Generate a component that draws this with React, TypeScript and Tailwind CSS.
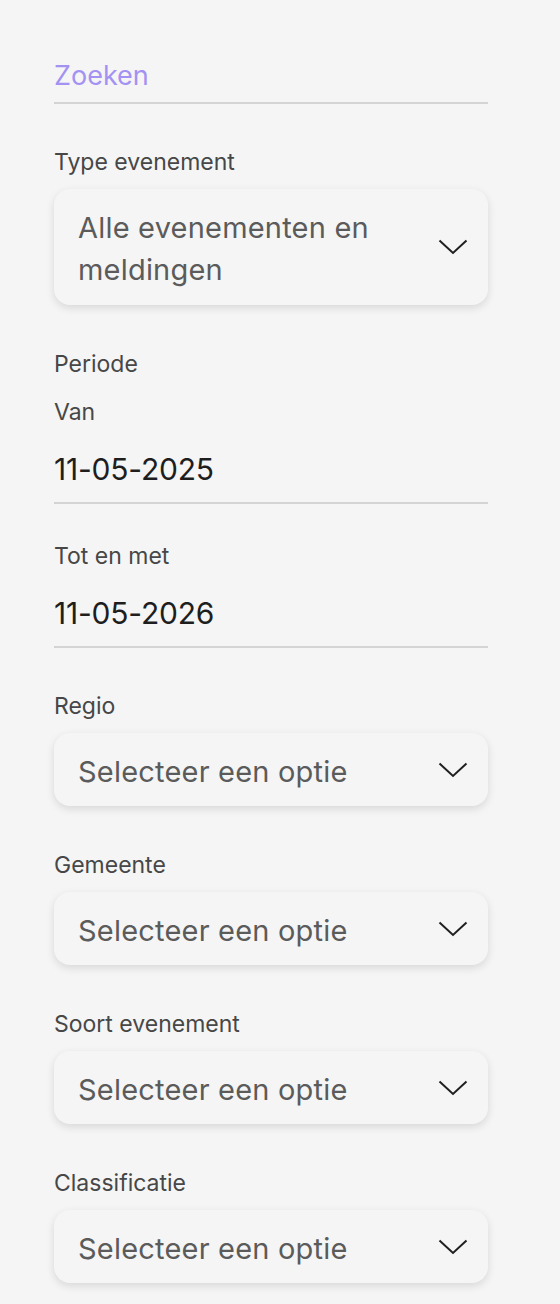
import React from "react";

const font = { fontFamily: "Inter, 'Noto Sans', sans-serif" };

function Chevron() {
  return (
    <svg width="30" height="16" viewBox="0 0 30 16" fill="none" className="shrink-0">
      <path d="M1.5 1.5 L15 14 L28.5 1.5" stroke="#1f1f1f" strokeWidth="2" />
    </svg>
  );
}

function Select({ text, tall }: { text: React.ReactNode; tall?: boolean }) {
  return (
    <div
      className={`flex items-center justify-between rounded-[16px] bg-[#f5f5f5] pl-6 pr-5 shadow-[0_3px_8px_rgba(0,0,0,0.12)] ${
        tall ? "h-[116px]" : "h-[73px]"
      }`}
    >
      <div className="pt-[4px] text-[29px] leading-[42px] text-[#5b5b5b] tracking-[0.2px]">{text}</div>
      <Chevron />
    </div>
  );
}

function Label({ children }: { children: React.ReactNode }) {
  return <div className="text-[23px] leading-[30px] text-[#474747]">{children}</div>;
}

export default function App() {
  return (
    <div className="min-h-[1304px] w-[560px] bg-[#f5f5f5] px-[54px] pt-[55px]" style={font}>
      <div className="w-[434px]">
        <div className="border-b-2 border-[#d4d4d4] pb-[5px]">
          <div className="text-[27px] leading-[42px] text-[#a492f3]">Zoeken</div>
        </div>
        <div className="mt-[43px]">
          <Label>Type evenement</Label>
        </div>
        <div className="mt-[12px]">
          <Select text={<>Alle evenementen en<br />meldingen</>} tall />
        </div>
        <div className="mt-[44px]">
          <Label>Periode</Label>
        </div>
        <div className="mt-[18px]">
          <Label>Van</Label>
        </div>
        <div className="border-b-2 border-[#d4d4d4] pt-[21px] pb-[12px]">
          <div className="text-[30px] leading-[42px] text-[#1e1e1e] tracking-[-0.2px]">11-05-2025</div>
        </div>
        <div className="mt-[37px]">
          <Label>Tot en met</Label>
        </div>
        <div className="border-b-2 border-[#d4d4d4] pt-[21px] pb-[12px]">
          <div className="text-[30px] leading-[42px] text-[#1e1e1e] tracking-[-0.2px]">11-05-2026</div>
        </div>
        {["Regio", "Gemeente", "Soort evenement", "Classificatie"].map((l, i) => (
          <div key={l} className={i === 0 ? "mt-[43px]" : "mt-[44px]"}>
            <Label>{l}</Label>
            <div className="mt-[12px]">
              <Select text="Selecteer een optie" />
            </div>
          </div>
        ))}
      </div>
    </div>
  );
}
